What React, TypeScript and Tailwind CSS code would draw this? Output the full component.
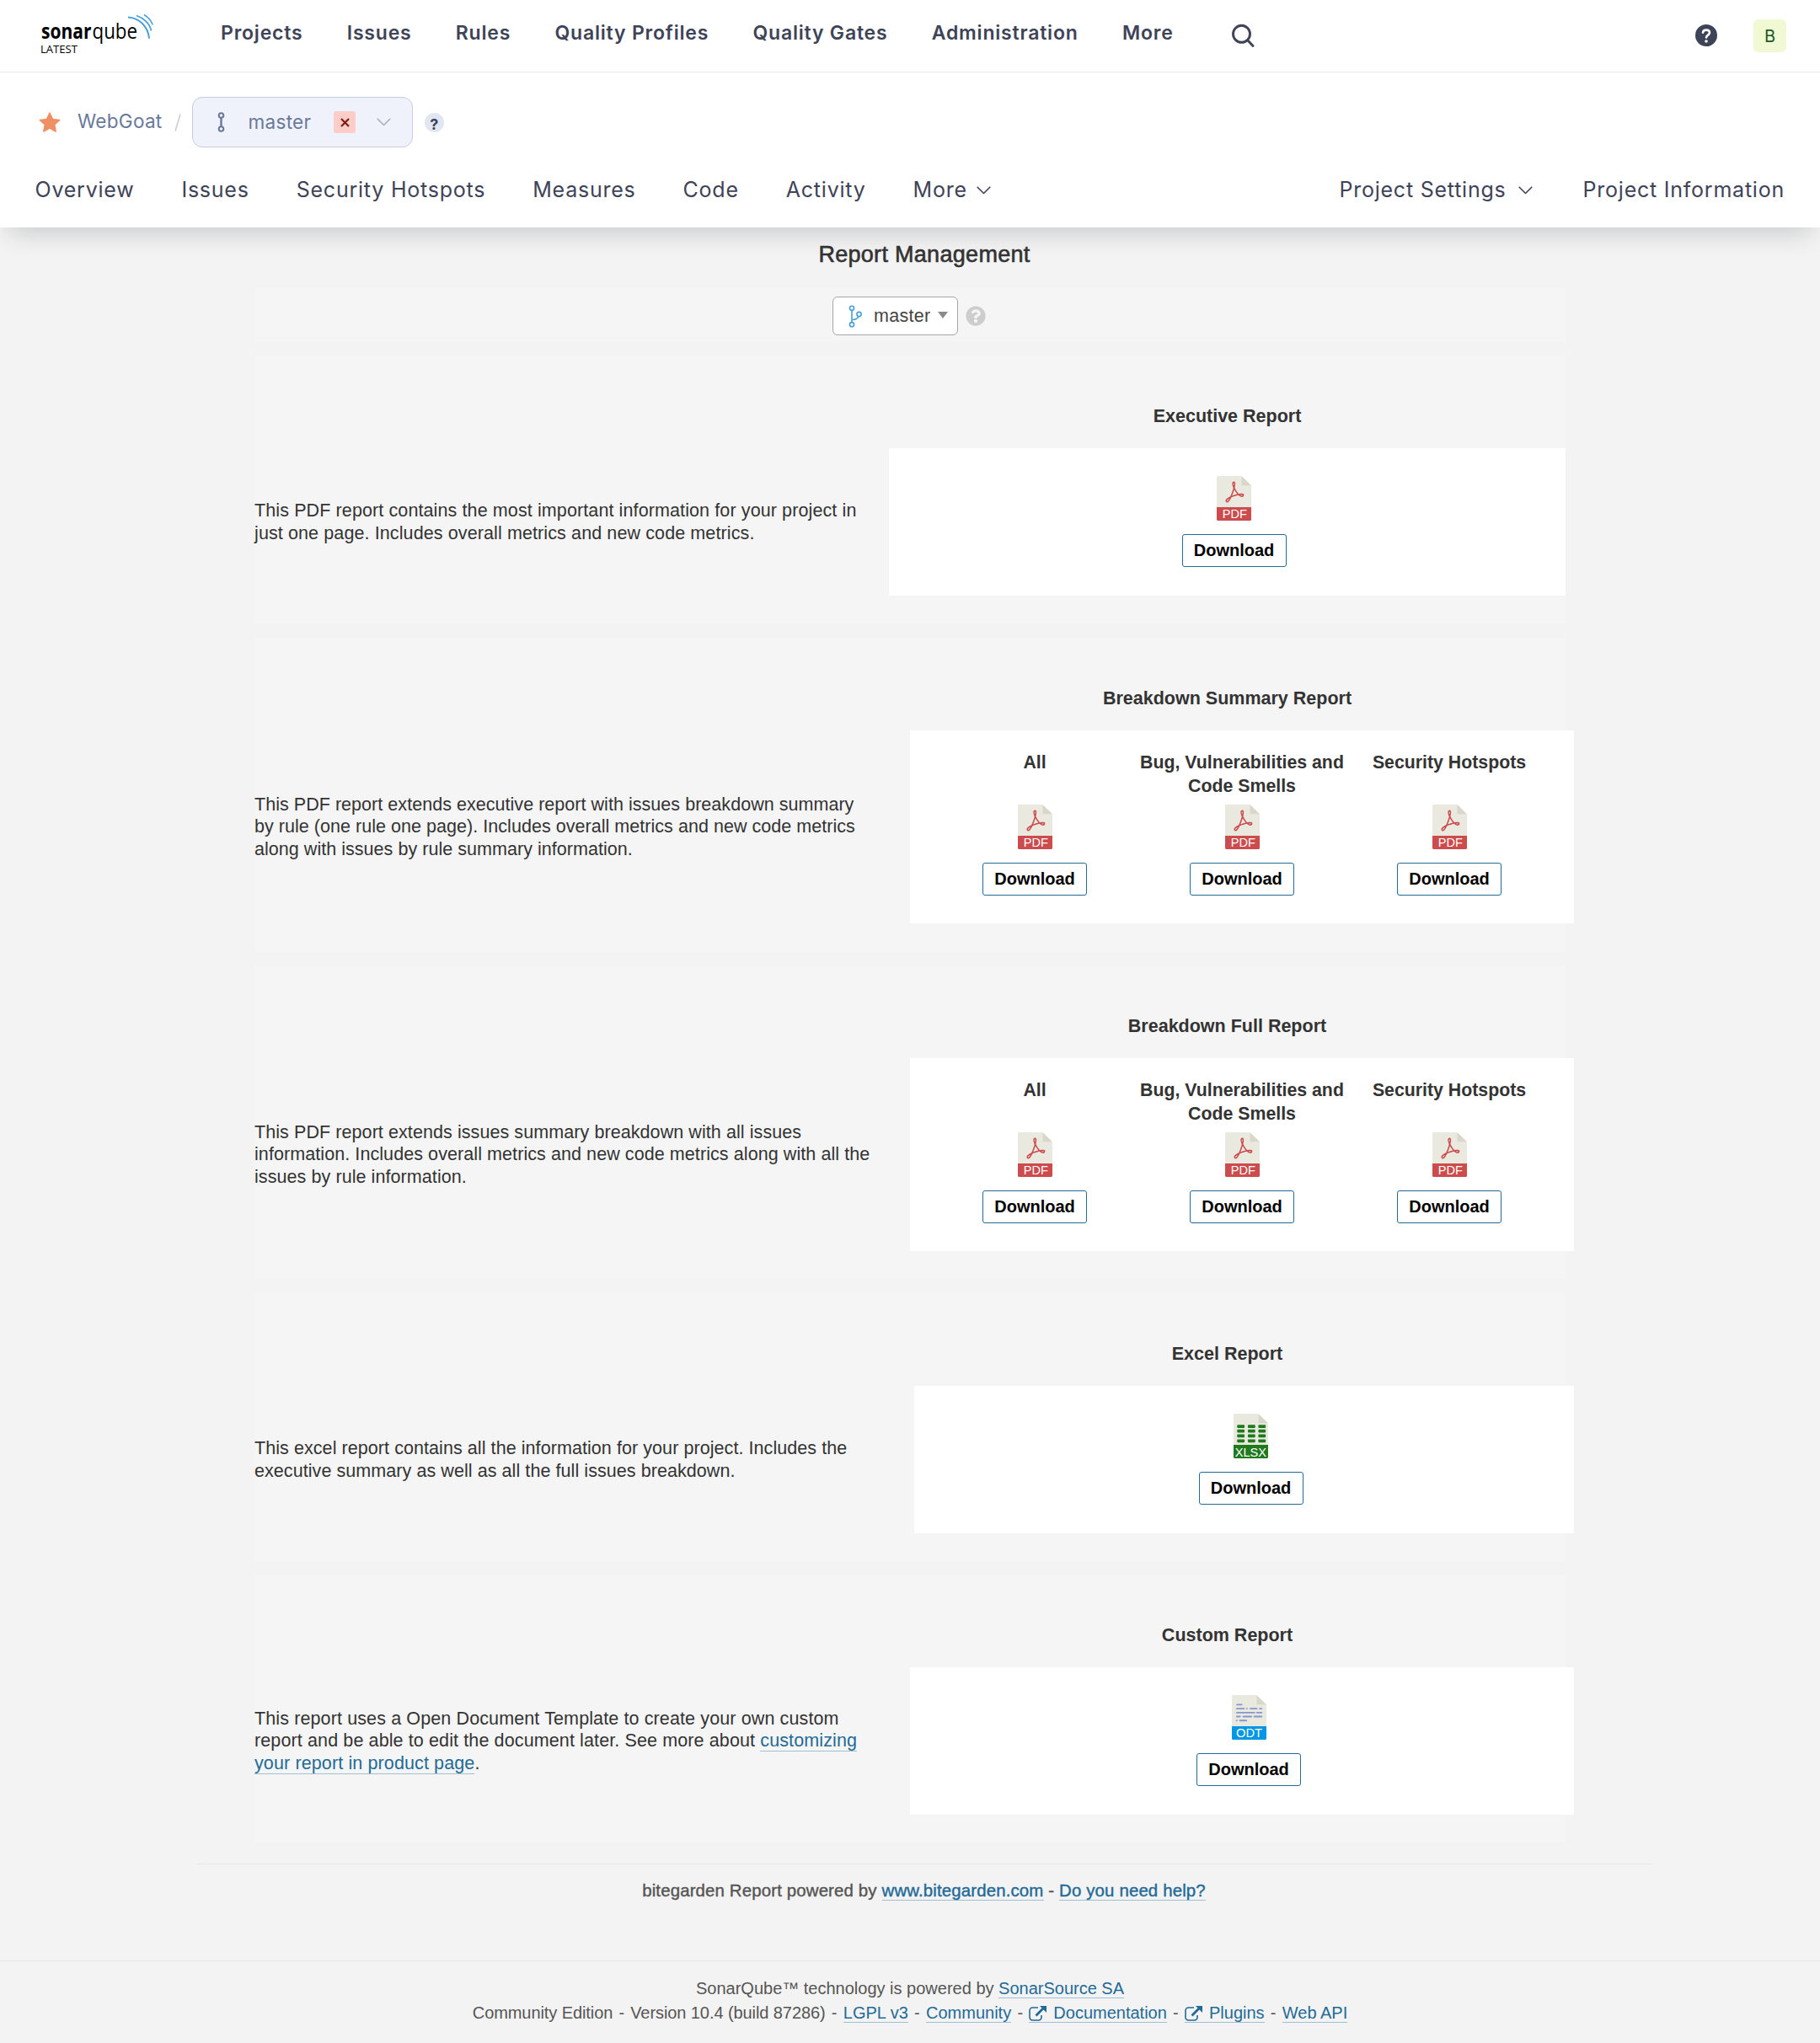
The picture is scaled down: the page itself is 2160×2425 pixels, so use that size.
import { type ReactNode } from "react";
import { FaQuestionCircle } from "react-icons/fa";

function Logo() {
  return (
    <svg width="140" height="54" viewBox="0 0 140 54" className="block">
      <text x="1" y="34" fontFamily="Open Sans, sans-serif" fontWeight="700" fontSize="25" textLength="59.5" lengthAdjust="spacingAndGlyphs">sonar</text>
      <text x="61.5" y="34" fontFamily="Open Sans, sans-serif" fontSize="25" textLength="53.5" lengthAdjust="spacingAndGlyphs">qube</text>
      <text x="0" y="51" fontFamily="Open Sans, sans-serif" fontSize="12.3" textLength="44" lengthAdjust="spacingAndGlyphs">LATEST</text>
      <g fill="none" stroke="#4b9fd5" strokeWidth="2">
        <path d="M104 8.500c13 .5 24 11 25 25.200" />
        <path d="M114 6.500c9 3 16 10 17.500 18" strokeWidth="1.700" />
        <path d="M123 5.500c5 3 8.500 7 10.300 12" strokeWidth="1.500" />
      </g>
    </svg>
  );
}

function Chevron({ className }: { className: string }) {
  return (
    <svg width="17" height="10" viewBox="0 0 17 10" className={className} fill="none" stroke="currentColor" strokeWidth="1.600" strokeLinecap="round" strokeLinejoin="round">
      <path d="M1.200 1.200 8.500 8.500l7.300-7.300" />
    </svg>
  );
}

function External() {
  return (
    <svg width="21" height="18" viewBox="0 0 21 18" className="mr-2 inline-block align-[-3px]" fill="none" stroke="#236a97">
      <path d="M11 2H4.500A3.500 3.500 0 0 0 1 5.500v8A3.500 3.500 0 0 0 4.500 17H11.500A3.500 3.500 0 0 0 15 13.500V11" strokeWidth="1.600" />
      <path d="M8.500 11.500 17 3" strokeWidth="2.800" />
      <path d="M13 0h8v8z" fill="#236a97" stroke="none" />
    </svg>
  );
}

type Kind = "PDF" | "XLSX" | "ODT";

function FileIcon({ kind }: { kind: Kind }) {
  const band = { PDF: "#cc4b4c", XLSX: "#1f7a1c", ODT: "#0096e6" }[kind];
  const label = { PDF: [13.6, 30.5, 53], XLSX: [8.4, 39, 53.4], ODT: [11.8, 32.5, 53] }[kind];
  return (
    <svg width="41" height="53" viewBox="6.5 0 43 56" preserveAspectRatio="none" className="block">
      <path fill="#e9e9e0" d="M36.985 0H7.963C7.155 0 6.500.655 6.500 1.926V55c0 .345.655 1 1.463 1h40.074c.808 0 1.463-.655 1.463-1V12.978c0-.696-.093-.920-.257-1.085L37.607.257A.880.880 0 0 0 36.985 0z" />
      <path fill="#d9d7ca" d="M37.500.151V12h11.849z" />
      {kind === "PDF" && (
        <path fill="#cc4b4c" d="M19.514,33.324c-0.348,0-0.682-0.113-0.967-0.326c-1.041-0.781-1.181-1.65-1.115-2.242c0.182-1.628,2.195-3.332,5.985-5.068c1.504-3.296,2.935-7.357,3.788-10.75c-0.998-2.172-1.968-4.99-1.261-6.643c0.248-0.579,0.557-1.023,1.134-1.215c0.228-0.076,0.804-0.172,1.016-0.172c0.504,0,0.947,0.649,1.261,1.049c0.295,0.376,0.964,1.173-0.373,6.802c1.348,2.784,3.258,5.62,5.088,7.562c1.311-0.237,2.439-0.358,3.358-0.358c1.566,0,2.515,0.365,2.902,1.117c0.32,0.622,0.189,1.349-0.39,2.16c-0.557,0.779-1.325,1.191-2.22,1.191c-1.216,0-2.632-0.768-4.211-2.285c-2.837,0.593-6.15,1.651-8.828,2.822c-0.836,1.774-1.637,3.203-2.383,4.251C21.273,32.654,20.389,33.324,19.514,33.324z M22.176,28.198c-2.137,1.201-3.008,2.188-3.071,2.744c-0.01,0.092-0.037,0.334,0.431,0.692C19.685,31.587,20.555,31.19,22.176,28.198z M35.813,23.756c0.815,0.627,1.014,0.944,1.547,0.944c0.234,0,0.901-0.01,1.21-0.441c0.149-0.209,0.207-0.343,0.23-0.415c-0.123-0.065-0.286-0.197-1.175-0.197C37.12,23.648,36.485,23.67,35.813,23.756z M28.343,17.174c-0.715,2.474-1.659,5.145-2.674,7.564c2.09-0.811,4.362-1.519,6.496-2.02C30.815,21.15,29.466,19.192,28.343,17.174z M27.736,8.712c-0.098,0.033-1.33,1.757,0.096,3.216C28.781,9.813,27.779,8.698,27.736,8.712z" />
      )}
      {kind === "XLSX" &&
        [13.9, 19.8, 25.9, 32.1].map((y) =>
          [11, 24.3, 37.3].map((x) => <rect key={`${x}-${y}`} x={x} y={y} width="9.2" height="4" rx="1" fill="#1f7a1c" />),
        )}
      {kind === "ODT" && (
        <path stroke="#8697cb" strokeWidth="2" strokeLinecap="round" fill="none" d="M12.700 12h6M12.700 17h9M25.300 17h.1M29.500 17h8M41.300 17h2.200M12.700 22h22M37.700 22h5.800M12.700 27h4M20.700 27h10M34.400 27h9.100M12.500 32h.1M16.500 32h8" />
      )}
      <path fill={band} d="M48.037 56H7.963c-.808 0-1.463-.655-1.463-1.463V39h43v15.537c0 .808-.655 1.463-1.463 1.463z" />
      <text x={label[0]} y={label[2]} textLength={label[1]} lengthAdjust="spacingAndGlyphs" fontFamily="Liberation Sans, sans-serif" fontSize="15.8" fill="#fff">
        {kind}
      </text>
    </svg>
  );
}

function Download({ kind }: { kind: Kind }) {
  return (
    <>
      <FileIcon kind={kind} />
      <button className="mt-4 h-[39px] w-[124px] rounded-[3px] border border-[#236a97] bg-white text-[20px] font-bold leading-[37px] text-black">
        Download
      </button>
    </>
  );
}

function A({ children }: { children: ReactNode }) {
  return <a className="border-b border-[#9fbfd2] text-[#236a97]">{children}</a>;
}

function Dash() {
  return <span className="px-[1.7px]"> - </span>;
}

function Report({ title, text, children, className = "" }: { title: string; text: ReactNode; children: ReactNode; className?: string }) {
  return (
    <section className={`grid grid-cols-[753px_803px] bg-[#f5f5f5] pb-[33px] ${className}`}>
      <h2 className="col-start-2 mb-6 mt-[58px] text-center text-[21.5px] font-bold leading-7 tracking-normal text-[#333]">{title}</h2>
      <p className="col-start-1 self-center whitespace-nowrap text-[21.5px] leading-[26.6px] text-[#333]">{text}</p>
      {children}
    </section>
  );
}

function Single({ kind, className = "" }: { kind: Kind; className?: string }) {
  return (
    <div className={`flex flex-col items-center bg-white pb-[34px] pl-4 pt-[33px] tracking-normal ${className}`}>
      <Download kind={kind} />
    </div>
  );
}

function Triple() {
  return (
    <div className="-mr-2.5 ml-[25px] grid grid-cols-[246px_246px_246px] justify-center bg-white pb-[33px] pt-6 tracking-normal">
      {["All", "Bug, Vulnerabilities and Code Smells", "Security Hotspots"].map((label) => (
        <div key={label} className="flex flex-col items-center">
          <h3 className="mb-2 h-[56px] text-center text-[21.3px] font-bold leading-7 text-[#333]">{label}</h3>
          <Download kind="PDF" />
        </div>
      ))}
    </div>
  );
}

export default function App() {
  return (
    <div className="flex min-h-[2425px] w-[2160px] flex-col bg-[#f3f3f3] font-['Liberation_Sans',Arial,sans-serif]">
      <header className="relative bg-white font-['Inter',sans-serif] text-[#3e4357] shadow-[0_16px_28px_-10px_rgba(29,33,47,0.2)]">
        <div className="flex h-[86px] items-center border-b border-[#e6e8ea] pl-12">
          <div className="-mt-[7px] w-[214px]"><Logo /></div>
          <nav className="flex gap-[52.3px] pb-1.5 text-[23px] font-semibold tracking-[0.8px]">
            {["Projects", "Issues", "Rules", "Quality Profiles", "Quality Gates", "Administration", "More"].map((t) => <a key={t}>{t}</a>)}
          </nav>
          <svg width="28" height="28" viewBox="0 0 28 28" className="-mt-px ml-[68px]" fill="none" stroke="currentColor" strokeWidth="2.900" strokeLinecap="round">
            <circle cx="12.500" cy="12.300" r="10" />
            <path d="m20 20 6 6.500" />
          </svg>
          <svg width="26" height="26" viewBox="0 0 26 26" className="-mt-px ml-auto">
            <circle cx="13" cy="13" r="13" fill="#3e4357" />
            <path d="M9 9.700C9.200 7.700 10.700 6.600 13 6.600c2.400 0 4 1.300 4 3.200 0 2.900-4 2.700-4 5.700" fill="none" stroke="#fff" strokeWidth="2.600" strokeLinecap="round" />
            <circle cx="13" cy="20" r="1.800" fill="#fff" />
          </svg>
          <div className="ml-[43px] mr-10 size-[39px] rounded-md bg-[#f1f9d4] text-center text-[20px] leading-[40px] text-[#215821]">B</div>
        </div>
        <div className="mt-[29px] flex h-[60px] items-center pl-[46px] text-[22.5px] tracking-[0.3px] text-[#69799b]">
          <svg width="26" height="24" viewBox="0 0 26 24" className="block">
            <path fill="#ee9063" stroke="#ee9063" strokeWidth="1.500" strokeLinejoin="round" d="m13 1 3.500 7.400 8.200 1-6 5.500 1.500 8.100-7.200-3.900L5.800 23l1.500-8.100-6-5.500 8.200-1z" />
          </svg>
          <span className="ml-5 -mt-0.5">WebGoat</span>
          <svg width="8" height="21" viewBox="0 0 8 21" className="ml-[14px] mr-[13.5px]" stroke="#c9c9cf" strokeWidth="1.500"><path d="M7 .5 1 20.500" /></svg>
          <div className="flex h-[60px] w-[262px] items-center rounded-xl border-[1.5px] border-[#c5cddf] bg-[#eff2fa]">
            <svg width="9" height="24" viewBox="0 0 9 24" className="ml-[29px]" fill="none" stroke="#69799b" strokeWidth="2">
              <circle cx="4.500" cy="4" r="2.800" /><circle cx="4.500" cy="20" r="2.800" /><path d="M4.500 7v10" strokeWidth="2.400" />
            </svg>
            <span className="ml-[27.5px]">master</span>
            <span className="ml-[27px] grid size-[26px] place-items-center rounded-[3px] bg-[#ffcdc8]">
              <svg width="11" height="11" viewBox="0 0 11 11" stroke="#801b14" strokeWidth="2.200"><path d="m1 1 9 9M10 1 1 10" /></svg>
            </span>
            <Chevron className="ml-[25px] text-[#a6adc5]" />
          </div>
          <span className="ml-3.5 grid size-[23px] place-items-center rounded-full bg-[#e1e6f3] text-[18px] font-bold text-[#3e4357]">?</span>
        </div>
        <nav className="flex h-[95px] items-center gap-14 pl-[41.5px] pr-[42px] pt-[6px] text-[25px] tracking-[0.77px]">
          {["Overview", "Issues", "Security Hotspots", "Measures", "Code", "Activity"].map((t) => <a key={t}>{t}</a>)}
          <a className="flex items-center">More<Chevron className="ml-[11px]" /></a>
          <a className="ml-auto mr-1 flex items-center">Project Settings<Chevron className="ml-[14px]" /></a>
          <a>Project Information</a>
        </nav>
      </header>

      <main className="mx-auto w-[1556px]">
        <h1 className="pb-[25px] pl-[34px] pt-4 text-center text-[27px] leading-8 tracking-[0.3px] text-[#333] [-webkit-text-stroke:0.6px_#333]">Report Management</h1>
        <div className="mb-4 flex h-[63px] bg-[#f5f5f5] pl-[686px]">
          <div className="mt-[9px] flex h-[46px] w-[149px] items-center rounded-md border border-[#a6a6a6] bg-white text-[21.5px] text-[#444]">
            <svg width="17" height="27" viewBox="0 0 17 27" className="ml-[18px]" fill="none" stroke="#4b9fd5" strokeWidth="1.600">
              <circle cx="4" cy="3.800" r="2.600" /><circle cx="4" cy="23.200" r="2.600" /><circle cx="12.500" cy="11" r="2.600" /><path d="M4 6.500v14M4 17.500c5 0 7-1 8-4" />
            </svg>
            <span className="ml-[13px] pt-px tracking-[0.3px]">master</span>
            <span className="-mt-0.5 ml-[8px] border-x-[6px] border-t-8 border-x-transparent border-t-[#8a8a8a]" />
          </div>
          <FaQuestionCircle className="ml-[9px] mt-5 size-[24px] text-[#cdcdcd]" />
        </div>

        <Report title="Executive Report" className="mb-[17px] tracking-[0.11px]" text={<>This PDF report contains the most important information for your project in<br />just one page. Includes overall metrics and new code metrics.</>}>
          <Single kind="PDF" />
        </Report>
        <Report title="Breakdown Summary Report" className="mb-[17px] tracking-[0.04px]" text={<>This PDF report extends executive report with issues breakdown summary<br />by rule (one rule one page). Includes overall metrics and new code metrics<br />along with issues by rule summary information.</>}>
          <Triple />
        </Report>
        <Report title="Breakdown Full Report" className="mb-[17px] tracking-[0.08px]" text={<>This PDF report extends issues summary breakdown with all issues<br />information. Includes overall metrics and new code metrics along with all the<br />issues by rule information.</>}>
          <Triple />
        </Report>
        <Report title="Excel Report" className="mb-4 tracking-[0.07px]" text={<>This excel report contains all the information for your project. Includes the<br />executive summary as well as all the full issues breakdown.</>}>
          <Single kind="XLSX" className="-mr-2.5 ml-[30px]" />
        </Report>
        <Report title="Custom Report" className="-mb-px tracking-[0.12px]" text={<>This report uses a Open Document Template to create your own custom<br />report and be able to edit the document later. See more about <A>customizing</A><br /><A>your report in product page</A>.</>}>
          <Single kind="ODT" className="-mr-2.5 ml-[25px]" />
        </Report>
      </main>

      <p className="ml-[233px] mt-[26px] w-[1727px] border-t border-[#e6e6e6] pt-[19px] text-center text-[20.4px] leading-6 tracking-[0.15px] text-[#555] [-webkit-text-stroke:0.4px]">
        bitegarden Report powered by <A>www.bitegarden.com</A> - <A>Do you need help?</A>
      </p>
      <footer className="mt-[71px] border-t border-[#e6e6e6] pt-[18px] text-center text-[20px] leading-[29px] text-[#555]">
        <p>SonarQube™ technology is powered by <A>SonarSource SA</A></p>
        <p className="whitespace-pre"><span className="tracking-[-0.08px]">Community Edition<Dash />Version 10.4 (build 87286)</span><Dash /><A>LGPL v3</A><Dash /><A>Community</A><Dash /><A><External />Documentation</A><Dash /><A><External />Plugins</A><Dash /><A>Web API</A></p>
      </footer>
    </div>
  );
}
